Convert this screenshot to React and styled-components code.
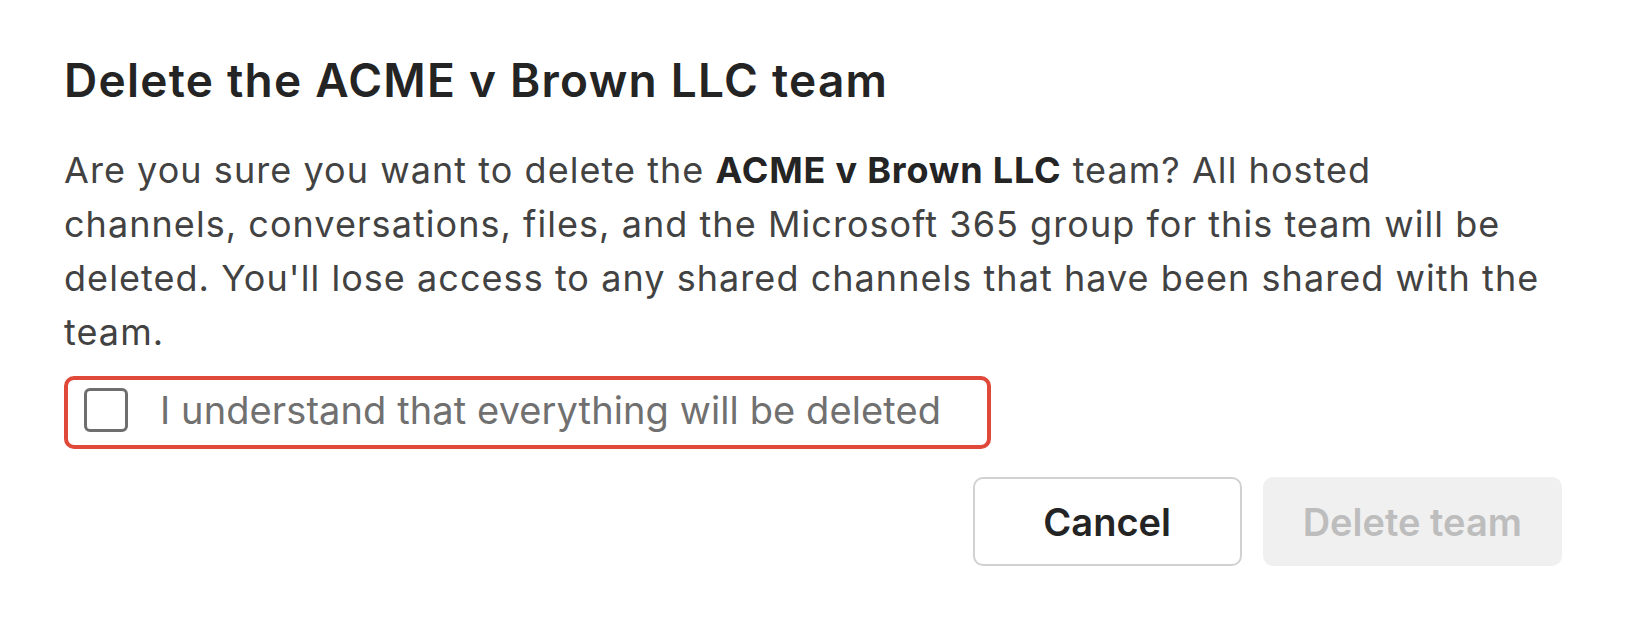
import React, { useState } from 'react';
import styled, { createGlobalStyle } from 'styled-components';

const GlobalStyle = createGlobalStyle`
  html, body {
    margin: 0;
    padding: 0;
    background: #ffffff;
  }
  body {
    font-family: Inter, "Noto Sans", "Liberation Sans", sans-serif;
    -webkit-font-smoothing: antialiased;
  }
`;

const Dialog = styled.div`
  box-sizing: border-box;
  width: 1632px;
  padding: 50px 70px 40px 64px;
  display: flex;
  flex-direction: column;
`;

const Title = styled.h1`
  margin: 0;
  font-size: 46px;
  line-height: 60px;
  font-weight: 600;
  letter-spacing: 1.25px;
  color: #242424;
`;

const Body = styled.p`
  margin: 33px 0 0;
  max-width: 1486px;
  font-size: 36px;
  line-height: 54px;
  font-weight: 400;
  letter-spacing: 1.05px;
  color: #424242;

  strong {
    font-weight: 700;
    letter-spacing: 0.8px;
    color: #242424;
  }
`;

const ConfirmRow = styled.label`
  align-self: flex-start;
  margin-top: 17px;
  display: flex;
  align-items: center;
  gap: 32px;
  padding: 8px 46px 13px 16px;
  border: 4px solid #e0483a;
  border-radius: 10px;
  cursor: pointer;
`;

const Box = styled.span`
  box-sizing: border-box;
  width: 44px;
  height: 44px;
  flex: none;
  border: 3px solid #6e6e6e;
  border-radius: 6px;
  background: ${p => (p.checked ? '#5b5fc7' : '#fff')};
`;

const ConfirmText = styled.span`
  font-size: 38px;
  line-height: 44px;
  letter-spacing: 0.1px;
  color: #707070;
`;

const Actions = styled.div`
  margin-top: 28px;
  display: flex;
  justify-content: flex-end;
  gap: 21px;
`;

const Button = styled.button`
  box-sizing: border-box;
  height: 89px;
  min-width: ${p => (p.primary ? '299px' : '269px')};
  padding: 0 38px;
  font-family: inherit;
  font-size: 38px;
  font-weight: 600;
  border-radius: 10px;
  border: ${p => (p.primary ? '2px solid #f0f0f0' : '2px solid #d1d1d1')};
  background: ${p => (p.primary ? '#f0f0f0' : '#ffffff')};
  color: ${p => (p.primary ? '#bdbdbd' : '#242424')};
  cursor: ${p => (p.disabled ? 'default' : 'pointer')};
`;

const App = () => {
  const [checked, setChecked] = useState(false);

  return (
    <Dialog>
      <GlobalStyle />
      <Title>Delete the ACME v Brown LLC team</Title>
      <Body>
        Are you sure you want to delete the <strong>ACME v Brown LLC</strong> team? All hosted
        channels, conversations, files, and the Microsoft 365 group for this team will be
        deleted. You'll lose access to any shared channels that have been shared with the
        team.
      </Body>
      <ConfirmRow onClick={() => setChecked(c => !c)}>
        <Box checked={checked} />
        <ConfirmText>I understand that everything will be deleted</ConfirmText>
      </ConfirmRow>
      <Actions>
        <Button>Cancel</Button>
        <Button primary disabled={!checked}>Delete team</Button>
      </Actions>
    </Dialog>
  );
};

export default App;
